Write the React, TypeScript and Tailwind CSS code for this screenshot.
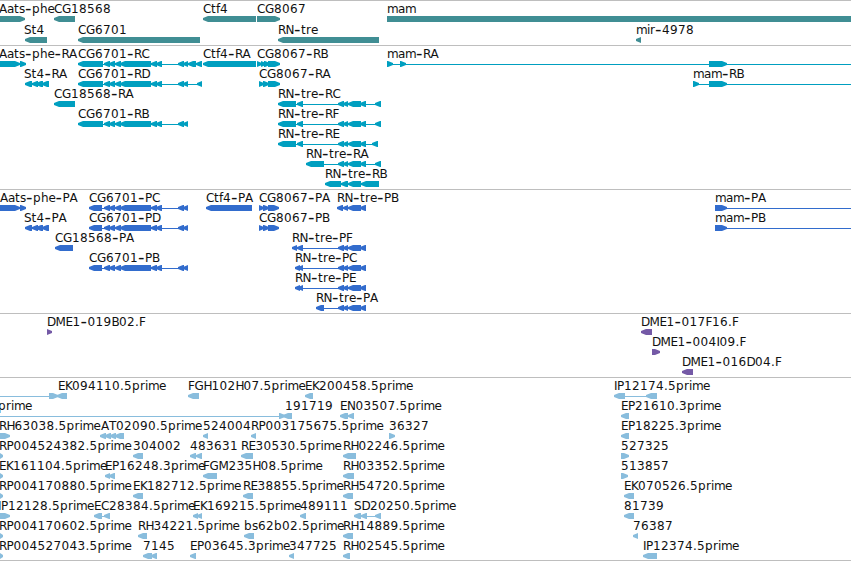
import React from 'react';

type Dir = 'l' | 'r' | 'n';

// [start, end, direction]
type Block = [number, number, Dir];

interface Feature {
  label?: string;
  x: number;
  blocks: Block[];
  // thin connector drawn behind the blocks
  line?: [number, number];
}

interface Track {
  id: string;
  color: string;
  rowClass: string;
  className: string;
  rows: Feature[][];
}

const left = (...points: [number, number][]): Block[] => points.map(([a, b]) => [a, b, 'l']);
const right = (...points: [number, number][]): Block[] => points.map(([a, b]) => [a, b, 'r']);

const cgMiddle: [number, number][] = [
  [104, 110], [109, 115], [115, 121], [120, 151], [151, 157], [156, 162], [178, 184], [183, 188],
];
const treTail: [number, number][] = [[338, 344], [343, 348], [348, 361], [360, 366]];
const st4: [number, number][] = [[25, 32], [32, 38], [36, 43], [42, 49]];

const tracks: Track[] = [
  {
    id: 'genes',
    color: '#408e94',
    rowClass: 'h-[21px]',
    className: 'pb-[2px]',
    rows: [
      [
        { label: 'Aats-phe', x: -1, blocks: right([0, 25]) },
        { label: 'CG18568', x: 54, blocks: left([54, 75]) },
        { label: 'Ctf4', x: 203, blocks: left([203, 256]) },
        { label: 'CG8067', x: 257, blocks: right([257, 280]) },
        { label: 'mam', x: 387, blocks: [[387, 851, 'n']] },
      ],
      [
        { label: 'St4', x: 24, blocks: left([25, 47]) },
        { label: 'CG6701', x: 78, blocks: left([78, 200]) },
        { label: 'RN-tre', x: 278, blocks: left([278, 379]) },
        { label: 'mir-4978', x: 636, blocks: left([636, 641]) },
      ],
    ],
  },
  {
    id: 'transcripts',
    color: '#009fc0',
    rowClass: 'h-5',
    className: 'pb-[3px]',
    rows: [
      [
        { label: 'Aats-phe-RA', x: -1, blocks: right([0, 20], [20, 26]), line: [0, 26] },
        { label: 'CG6701-RC', x: 78, blocks: left([78, 103], ...cgMiddle, [188, 196], [196, 202]), line: [78, 202] },
        { label: 'Ctf4-RA', x: 203, blocks: left([203, 256]) },
        { label: 'CG8067-RB', x: 257, blocks: right([257, 262], [261, 266], [264, 270], [268, 280]), line: [257, 280] },
        { label: 'mam-RA', x: 387, blocks: right([387, 393], [400, 406], [709, 727]), line: [387, 851] },
      ],
      [
        { label: 'St4-RA', x: 24, blocks: left(...st4), line: [25, 49] },
        { label: 'CG6701-RD', x: 78, blocks: left([78, 103], ...cgMiddle, [197, 202]), line: [78, 202] },
        { label: 'CG8067-RA', x: 259, blocks: right([259, 264], [263, 269], [268, 280]), line: [259, 280] },
        { label: 'mam-RB', x: 693, blocks: right([693, 699], [709, 727]), line: [693, 851] },
      ],
      [
        { label: 'CG18568-RA', x: 54, blocks: left([54, 75]) },
        { label: 'RN-tre-RC', x: 278, blocks: left([278, 296], [297, 303], ...treTail, [375, 381]), line: [278, 381] },
      ],
      [
        { label: 'CG6701-RB', x: 78, blocks: left([78, 103], ...cgMiddle), line: [78, 188] },
        { label: 'RN-tre-RF', x: 278, blocks: left([278, 296], [297, 303], ...treTail, [375, 381]), line: [278, 381] },
      ],
      [{ label: 'RN-tre-RE', x: 278, blocks: left([278, 296], [297, 303], ...treTail, [372, 378]), line: [278, 378] }],
      [{ label: 'RN-tre-RA', x: 306, blocks: left([306, 324], ...treTail, [375, 381]), line: [306, 381] }],
      [{ label: 'RN-tre-RB', x: 325, blocks: left([325, 341], [341, 348], [348, 361], [361, 379]), line: [325, 379] }],
    ],
  },
  {
    id: 'proteins',
    color: '#326ccd',
    rowClass: 'h-5',
    className: 'pb-[3px]',
    rows: [
      [
        { label: 'Aats-phe-PA', x: 0, blocks: right([0, 20], [20, 26]), line: [0, 26] },
        { label: 'CG6701-PC', x: 89, blocks: left([89, 102], ...cgMiddle), line: [89, 188] },
        { label: 'Ctf4-PA', x: 206, blocks: left([206, 252]) },
        { label: 'CG8067-PA', x: 259, blocks: right([259, 264], [263, 269], [268, 279]), line: [259, 279] },
        { label: 'RN-tre-PB', x: 337, blocks: left([337, 343], ...treTail.slice(1)), line: [337, 366] },
        { label: 'mam-PA', x: 715, blocks: right([715, 727]), line: [715, 851] },
      ],
      [
        { label: 'St4-PA', x: 24, blocks: left(...st4), line: [25, 49] },
        { label: 'CG6701-PD', x: 89, blocks: left([89, 102], ...cgMiddle), line: [89, 188] },
        { label: 'CG8067-PB', x: 259, blocks: right([259, 264], [263, 269], [268, 279]), line: [259, 279] },
        { label: 'mam-PB', x: 715, blocks: right([715, 727]), line: [715, 851] },
      ],
      [
        { label: 'CG18568-PA', x: 55, blocks: left([55, 73]) },
        { label: 'RN-tre-PF', x: 292, blocks: left([292, 297], [297, 303], ...treTail), line: [292, 366] },
      ],
      [
        { label: 'CG6701-PB', x: 89, blocks: left([89, 102], ...cgMiddle), line: [89, 188] },
        { label: 'RN-tre-PC', x: 295, blocks: left([295, 300], [298, 303], ...treTail), line: [295, 366] },
      ],
      [{ label: 'RN-tre-PE', x: 295, blocks: left([295, 300], [298, 303], ...treTail), line: [295, 366] }],
      [{ label: 'RN-tre-PA', x: 316, blocks: left([316, 324], ...treTail), line: [316, 366] }],
    ],
  },
  {
    id: 'bac-ends',
    color: '#7459a6',
    rowClass: 'h-5',
    className: 'pb-[3px]',
    rows: [
      [
        { label: 'DME1-019B02.F', x: 47, blocks: right([47, 52]) },
        { label: 'DME1-017F16.F', x: 641, blocks: left([641, 652]) },
      ],
      [{ label: 'DME1-004I09.F', x: 652, blocks: right([652, 660]) }],
      [{ label: 'DME1-016D04.F', x: 682, blocks: left([682, 693]) }],
    ],
  },
  {
    id: 'ests',
    color: '#89bddd',
    rowClass: 'h-5',
    className: 'pb-[2px]',
    rows: [
      [
        { label: 'EK094110.5prime', x: 58, blocks: [[49, 58, 'r'], [57, 67, 'l']], line: [0, 60] },
        { label: 'FGH102H07.5prime', x: 188, blocks: left([188, 199]) },
        { label: 'EK200458.5prime', x: 305, blocks: left([305, 313]) },
        { label: 'IP12174.5prime', x: 614, blocks: left([614, 625], [646, 657]), line: [614, 657] },
      ],
      [
        { label: 'prime', x: -2, blocks: [[279, 285, 'r'], [283, 292, 'l']], line: [0, 287] },
        { label: '191719', x: 285, blocks: [] },
        { label: 'EN03507.5prime', x: 340, blocks: left([340, 348], [348, 354]), line: [340, 354] },
        { label: 'EP21610.3prime', x: 621, blocks: left([621, 629]) },
      ],
      [
        { label: 'RH63038.5prime', x: -1, blocks: right([0, 10]) },
        { label: 'AT02090.5prime', x: 101, blocks: left([100, 106], [105, 111], [110, 116], [115, 124]), line: [100, 124] },
        { label: '524004', x: 203, blocks: left([203, 208]) },
        { label: 'RP003175675.5prime', x: 251, blocks: left([251, 256]) },
        { label: '36327', x: 389, blocks: right([389, 395]) },
        { label: 'EP18225.3prime', x: 621, blocks: left([621, 629]) },
      ],
      [
        { label: 'RP004524382.5prime', x: -1, blocks: right([0, 3]) },
        { label: '304002', x: 133, blocks: left([133, 143]) },
        { label: '483631', x: 190, blocks: left([190, 196], [196, 202]), line: [190, 202] },
        { label: 'RE30530.5prime', x: 241, blocks: left([241, 253]) },
        { label: 'RH02246.5prime', x: 343, blocks: left([343, 356]) },
        { label: '527325', x: 621, blocks: right([621, 629]) },
      ],
      [
        { label: 'EK161104.5prime', x: -1, blocks: right([0, 3]) },
        { label: 'EP16248.3prime', x: 105, blocks: left([105, 110], [109, 115]) },
        { label: 'FGM235H08.5prime', x: 203, blocks: left([203, 217]) },
        { label: 'RH03352.5prime', x: 343, blocks: left([343, 354]) },
        { label: '513857', x: 621, blocks: right([621, 628]) },
      ],
      [
        { label: 'RP004170880.5prime', x: -1, blocks: right([0, 3]) },
        { label: 'EK182712.5prime', x: 133, blocks: left([133, 143]) },
        { label: 'RE38855.5prime', x: 243, blocks: left([243, 253]) },
        { label: 'RH54720.5prime', x: 343, blocks: left([343, 353]) },
        { label: 'EK070526.5prime', x: 624, blocks: left([624, 634]) },
      ],
      [
        { label: 'IP12128.5prime', x: -2, blocks: right([0, 10]) },
        { label: 'EC28384.5prime', x: 94, blocks: left([94, 102], [104, 110]), line: [94, 110] },
        { label: 'EK169215.5prime', x: 193, blocks: left([193, 198], [197, 202]) },
        { label: '489111', x: 300, blocks: left([300, 306]) },
        { label: 'SD20250.5prime', x: 354, blocks: left([354, 361], [361, 367], [375, 381]), line: [354, 381] },
        { label: '81739', x: 624, blocks: left([624, 634]) },
      ],
      [
        { label: 'RP004170602.5prime', x: -1, blocks: right([0, 3]) },
        { label: 'RH34221.5prime', x: 138, blocks: left([138, 147]) },
        { label: 'bs62b02.5prime', x: 244, blocks: left([244, 254]) },
        { label: 'RH14889.5prime', x: 343, blocks: left([343, 353]) },
        { label: '76387', x: 633, blocks: left([633, 638]) },
      ],
      [
        { label: 'RP004527043.5prime', x: -1, blocks: right([0, 3]) },
        { label: '7145', x: 143, blocks: left([143, 152], [151, 157]) },
        { label: 'EP03645.3prime', x: 190, blocks: left([190, 196]) },
        { label: '347725', x: 289, blocks: left([289, 294]) },
        { label: 'RH02545.5prime', x: 343, blocks: left([343, 350]) },
        { label: 'IP12374.5prime', x: 643, blocks: left([643, 657]) },
      ],
    ],
  },
];

// advances for the 12px label font, digits and wide capitals default to 8
const ADVANCES: Record<string, number> = {
  G: 9, R: 7.5, N: 8.5, D: 8.5, M: 10, E: 7, K: 7, B: 7.5, S: 7.5, P: 7, F: 6.5, T: 7, I: 3,
  a: 7, t: 5, s: 6, h: 7.5, e: 7, f: 4, r: 5, i: 3, m: 11, '-': 7, '.': 4,
};

const glyphPositions = (label: string, start: number) => {
  let x = start;
  return label.split('').map(char => {
    const pos = x;
    x += ADVANCES[char] ?? 8;
    return pos;
  }).join(' ');
};

// the larger hyphen sits one pixel lower to stay centred on the digits
const glyphBaselines = (label: string) => label.split('').map(char => (char === '-' ? 13 : 12)).join(' ');

const blockPoints = ([a, b, dir]: Block) => {
  if (dir === 'n') return `${a},15 ${b},15 ${b},21 ${a},21`;
  const head = Math.min(5, b - a);
  return dir === 'l'
    ? `${a},17 ${a + head},15 ${b},15 ${b},21 ${a + head},21 ${a},19`
    : `${a},15 ${b - head},15 ${b},17 ${b},19 ${b - head},21 ${a},21`;
};

const FeatureGlyph: React.FC<{ feature: Feature; color: string }> = ({ feature, color }) => (
  <g>
    {feature.line && (
      <rect x={feature.line[0]} y={18} width={feature.line[1] - feature.line[0]} height={1} fill={color} />
    )}
    {feature.blocks.map((block, i) => (
      <polygon key={i} points={blockPoints(block)} fill={color} />
    ))}
    {feature.label && (
      <text x={glyphPositions(feature.label, feature.x)} y={glyphBaselines(feature.label)} fill="#111">
        {feature.label.split(/(-)/).map((part, i) => (
          <tspan key={i} className={part === '-' ? 'text-[18px]' : undefined}>{part}</tspan>
        ))}
      </text>
    )}
  </g>
);

const App: React.FC = () => {
  return (
    <div className="w-[851px] h-[561px] overflow-hidden bg-white flex flex-col border-b border-[#bebebe]">
      {tracks.map(track => (
        <section key={track.id} className={`border-t border-[#bebebe] ${track.className}`}>
          {track.rows.map((row, i) => (
            <div key={i} className={track.rowClass}>
              <svg
                width="851"
                height="22"
                className="block overflow-visible text-[12px] font-['DejaVu_Sans',sans-serif]"
              >
                {row.map(feature => (
                  <FeatureGlyph key={feature.label} feature={feature} color={track.color} />
                ))}
              </svg>
            </div>
          ))}
        </section>
      ))}
    </div>
  );
};

export default App;
